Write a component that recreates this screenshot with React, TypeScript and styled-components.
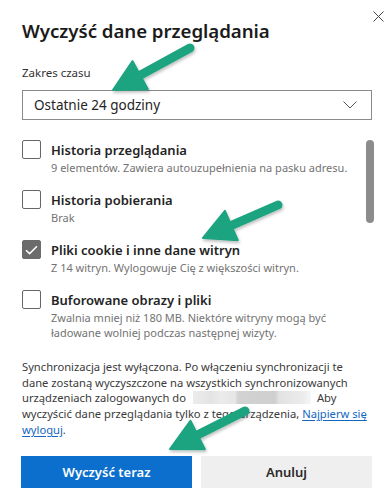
import React from "react";
import styled, { createGlobalStyle } from "styled-components";

const Global = createGlobalStyle`
  html, body { margin: 0; padding: 0; background: #fff; }
  body { font-family: "Noto Sans", "Open Sans", sans-serif; color: #242424; }
  * { box-sizing: border-box; }
`;

const Page = styled.div`
  position: relative;
  width: 391px;
  height: 502px;
  background: #fff;
  overflow: hidden;
`;

const Header = styled.div`
  display: flex;
  justify-content: space-between;
  align-items: flex-start;
  padding: 0 7px 0 22px;
`;

const Title = styled.h1`
  margin: 17px 0 0 0;
  font-size: 18.7px;
  line-height: 28px;
  font-weight: 600;
  color: #1b1b1b;
  letter-spacing: -0.05px;
`;

const CloseButton = styled.button`
  margin-top: 11px;
  width: 11px;
  height: 11px;
  padding: 0;
  border: none;
  background: transparent;
  display: flex;
  align-items: center;
  justify-content: center;
`;

const Body = styled.div`
  padding: 0 19px 0 22px;
`;

const FieldLabel = styled.div`
  margin-top: 20px;
  font-size: 11.5px;
  line-height: 16px;
  color: #333;
`;

const Select = styled.div`
  margin-top: 9px;
  height: 30px;
  border: 1.5px solid #8a8a8a;
  display: flex;
  align-items: center;
  justify-content: space-between;
  padding: 0 14px 0 11px;
  font-size: 13.5px;
  color: #242424;
`;

const ScrollArea = styled.div`
  margin-top: 10px;
  height: 213px;
  display: flex;
  overflow: hidden;
  margin-right: -2px;
`;

const List = styled.div`
  flex: 1;
  display: flex;
  flex-direction: column;
  gap: 15px;
  padding-top: 10px;
`;

const Track = styled.div`
  width: 8px;
  padding-top: 10px;
  margin-left: 4px;
`;

const Thumb = styled.div`
  width: 8px;
  height: 83px;
  border-radius: 4px;
  background: #8c8c8c;
`;

const Item = styled.div`
  display: flex;
  gap: 10px;
  align-items: flex-start;
`;

const Box = styled.div<{ $checked?: boolean }>`
  flex: none;
  width: 19px;
  height: 19px;
  border-radius: 2px;
  border: 1px solid ${(p) => (p.$checked ? "#6b6b6b" : "#666")};
  background: ${(p) => (p.$checked ? "#6b6b6b" : "#fff")};
  display: flex;
  align-items: center;
  justify-content: center;
`;

const ItemText = styled.div`
  display: flex;
  flex-direction: column;
  padding-top: 1px;
`;

const ItemLabel = styled.div`
  font-size: 13px;
  line-height: 18px;
  font-weight: 600;
  color: #242424;
`;

const ItemSub = styled.div`
  font-size: 11px;
  line-height: 15px;
  color: #737373;
  margin-top: 1px;
`;

const SyncText = styled.p`
  margin: 16px 0 0 0;
  font-size: 11.2px;
  line-height: 15.7px;
  color: #3a3a3a;
  white-space: nowrap;
`;

const Blur = styled.span`
  display: inline-block;
  width: 118px;
  height: 13px;
  vertical-align: -2px;
  margin: 0 6px 0 7px;
  background: linear-gradient(
    90deg,
    #ececec 0px,
    #e4e4e4 18px,
    #ebebeb 28px,
    #e6e6e6 42px,
    #d2d2d2 45px,
    #cfcfcf 82px,
    #e2e2e2 86px,
    #ececec 110px,
    #f7f7f7 118px
  );
`;

const Link = styled.a`
  color: #1266c2;
  text-decoration: underline;
  text-underline-offset: 2px;
`;

const Buttons = styled.div`
  margin-top: 18px;
  display: flex;
  gap: 9px;
  margin-left: -1px;
`;

const Button = styled.button<{ $primary?: boolean }>`
  flex: 1;
  height: 32px;
  border: none;
  border-radius: 0;
  font-family: inherit;
  font-size: 13px;
  font-weight: 600;
  color: ${(p) => (p.$primary ? "#fff" : "#2a2a2a")};
  background: ${(p) => (p.$primary ? "#0c6fcd" : "#efefef")};
`;

const Overlay = styled.svg`
  position: absolute;
  left: 0;
  top: 0;
  pointer-events: none;
`;

type Pt = [number, number];
const arrows: { t: Pt; p: Pt }[] = [
  { t: [190, 48], p: [113, 90] },
  { t: [278, 205], p: [203, 238] },
  { t: [245, 411], p: [170, 449] },
];

function arrowGeom(t: Pt, p: Pt, L = 31, W = 16) {
  const dx = p[0] - t[0];
  const dy = p[1] - t[1];
  const len = Math.hypot(dx, dy);
  const ux = dx / len;
  const uy = dy / len;
  const bx = p[0] - ux * L;
  const by = p[1] - uy * L;
  const nx = -uy;
  const ny = ux;
  return {
    x2: bx + ux * 3,
    y2: by + uy * 3,
    head: `${p[0]},${p[1]} ${bx + nx * W},${by + ny * W} ${bx - nx * W},${by - ny * W}`,
  };
}

const Check = () => (
  <svg width="13" height="10" viewBox="0 0 13 10">
    <path d="M1 5.2 L4.6 8.6 L12 1.2" fill="none" stroke="#fff" strokeWidth="1.5" />
  </svg>
);

export default function App() {
  return (
    <Page>
      <Global />
      <Header>
        <Title>Wyczyść dane przeglądania</Title>
        <CloseButton aria-label="Zamknij">
          <svg width="11" height="11" viewBox="0 0 11 11">
            <path d="M0.5 0.5 L10.5 10.5 M10.5 0.5 L0.5 10.5" stroke="#444" strokeWidth="1" />
          </svg>
        </CloseButton>
      </Header>
      <Body>
        <FieldLabel>Zakres czasu</FieldLabel>
        <Select>
          <span>Ostatnie 24 godziny</span>
          <svg width="14" height="8" viewBox="0 0 14 8">
            <path d="M0.5 0.5 L7 7 L13.5 0.5" fill="none" stroke="#555" strokeWidth="1" />
          </svg>
        </Select>
        <ScrollArea>
          <List>
            <Item>
              <Box />
              <ItemText>
                <ItemLabel>Historia przeglądania</ItemLabel>
                <ItemSub>9 elementów. Zawiera autouzupełnienia na pasku adresu.</ItemSub>
              </ItemText>
            </Item>
            <Item>
              <Box />
              <ItemText>
                <ItemLabel>Historia pobierania</ItemLabel>
                <ItemSub>Brak</ItemSub>
              </ItemText>
            </Item>
            <Item>
              <Box $checked>
                <Check />
              </Box>
              <ItemText>
                <ItemLabel>Pliki cookie i inne dane witryn</ItemLabel>
                <ItemSub>Z 14 witryn. Wylogowuje Cię z większości witryn.</ItemSub>
              </ItemText>
            </Item>
            <Item>
              <Box />
              <ItemText>
                <ItemLabel>Buforowane obrazy i pliki</ItemLabel>
                <ItemSub>
                  Zwalnia mniej niż 180 MB. Niektóre witryny mogą być
                  <br />
                  ładowane wolniej podczas następnej wizyty.
                </ItemSub>
              </ItemText>
            </Item>
          </List>
          <Track>
            <Thumb />
          </Track>
        </ScrollArea>
        <SyncText>
          Synchronizacja jest wyłączona. Po włączeniu synchronizacji te
          <br />
          dane zostaną wyczyszczone na wszystkich synchronizowanych
          <br />
          urządzeniach zalogowanych do
          <Blur />
          Aby
          <br />
          wyczyścić dane przeglądania tylko z tego urządzenia, <Link href="#">Najpierw się
          <br />
          wyloguj</Link>.
        </SyncText>
        <Buttons>
          <Button $primary>Wyczyść teraz</Button>
          <Button>Anuluj</Button>
        </Buttons>
      </Body>
      <Overlay width="391" height="502" viewBox="0 0 391 502">
        <defs>
          <filter id="sh" x="-20%" y="-20%" width="140%" height="140%">
            <feDropShadow dx="1" dy="2" stdDeviation="1.5" floodColor="#000" floodOpacity="0.25" />
          </filter>
        </defs>
        {arrows.map((a, i) => {
          const g = arrowGeom(a.t, a.p);
          return (
            <g key={i} filter="url(#sh)" fill="#1fa480" stroke="#1fa480">
              <line x1={a.t[0]} y1={a.t[1]} x2={g.x2} y2={g.y2} strokeWidth="9" strokeLinecap="round" />
              <polygon points={g.head} strokeWidth="2" strokeLinejoin="round" />
            </g>
          );
        })}
      </Overlay>
    </Page>
  );
}
